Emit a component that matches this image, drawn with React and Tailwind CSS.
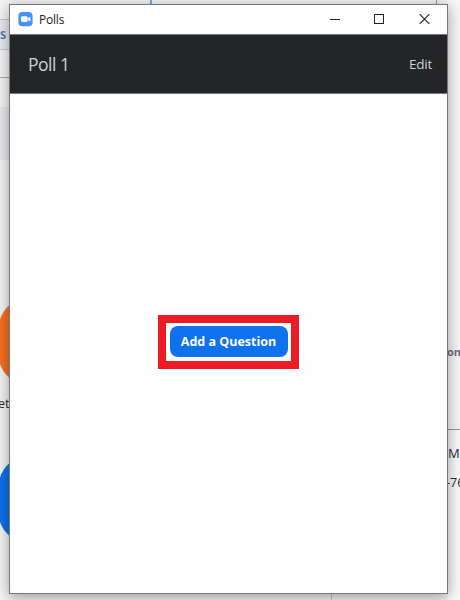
function ZoomLogo() {
  return (
    <svg width="15" height="15" viewBox="0 0 15 15" className="shrink-0">
      <rect x="0.4" y="0" width="14.2" height="14.2" rx="4" fill="#4590fb" />
      <rect x="3" y="4.3" width="6.6" height="5.6" rx="1.3" fill="#fff" />
      <path d="M9.9 6.2 12.4 4.4V9.8L9.9 8Z" fill="#fff" />
    </svg>
  );
}

function WindowControls() {
  return (
    <svg width="102" height="12" viewBox="0 0 102 12" fill="none" stroke="#222" className="shrink-0">
      <path d="M0 5.5H10" />
      <rect x="44.5" y="0.5" width="9" height="9" />
      <path d="M89.7 0.2 99.3 9.8M99.3 0.2 89.7 9.8" strokeWidth="1.1" />
    </svg>
  );
}

function LeftStrip() {
  return (
    <div className="h-full w-[9px] shrink-0 overflow-hidden bg-[#f5f5f5] text-[#27273a]">
      <div className="h-5 border-b border-[#c8c8c8]" />
      <div className="h-[30px] border-b border-[#c5cad2] bg-[#e7ecf4] pt-[7px] text-[11px] leading-4 font-bold text-[#5577a5]">S</div>
      <div className="h-[28px] border-b border-[#a8a8a8]" />
      <div className="h-[29px]" />
      <div className="h-[53px] bg-[#e9eaee]" />
      <div className="h-[139px]" />
      <div className="-ml-px h-[85px] w-[85px] rounded-[28px] bg-[#f97022]" />
      <div className="-ml-[2px] h-[73px] pt-[12px] text-[12.5px] leading-4">et</div>
      <div className="-ml-px h-[85px] w-[85px] rounded-[28px] bg-[#0e72ed]" />
    </div>
  );
}

function RightStrip() {
  return (
    <div className="h-full w-3 shrink-0 overflow-hidden bg-[#fafafa] text-[#27273a]">
      <div className="h-[430px] border-b border-[#999] bg-[#f7f7f7] pt-[344px] text-[11px] leading-4 font-bold text-[#6c6c7c]">
        <span className="-ml-px">on</span>
      </div>
      <div className="mt-[15px] text-[13px] leading-4">M</div>
      <div className="mt-[14px] -ml-[2px] text-[12.5px] leading-4 whitespace-nowrap">-76</div>
    </div>
  );
}

export default function App() {
  return (
    <div className="flex h-[600px] w-[460px] overflow-hidden bg-[#f0f0f0] font-['Open_Sans','Noto_Sans',sans-serif]">
      <LeftStrip />
      <div className="flex w-[439px] shrink-0 flex-col">
        <div className="flex h-1 shrink-0 bg-[#f3f3f3]">
          <div className="w-[143px] border-r-2 border-[#6fb2d2]" />
          <div className="w-[285px] border-r border-[#999]" />
        </div>
        <main className="z-10 flex h-[590px] shrink-0 flex-col border border-[#777] bg-[#fefefe] shadow-[0_3px_14px_rgba(0,0,0,0.38)]">
          <header className="flex h-[30px] shrink-0 items-center border-b border-[#777] bg-white pl-2">
            <ZoomLogo />
            <span className="ml-[6px] grow text-[12px] leading-4 tracking-[-0.2px] text-[#222]">Polls</span>
            <div className="mr-[15px]"><WindowControls /></div>
          </header>
          <div className="flex h-[59px] shrink-0 items-center justify-between border-b border-[#777] bg-[#232527] pr-[15px] pl-[18px] text-[#d0d0d0]">
            <h1 className="-mt-px text-[17.5px] leading-6 font-normal tracking-[-0.5px]">Poll 1</h1>
            <button className="-mt-px text-[13.5px] leading-5 font-normal tracking-[-0.25px]">Edit</button>
          </div>
          <div className="flex grow flex-col items-center pt-[221px]">
            <div className="flex h-[54px] w-[141px] items-start justify-center border-8 border-[#ed1c24] bg-white pt-[3px]">
              <button className="h-[31px] w-[118px] rounded-lg bg-[#0e72ed] pt-px text-[12.5px] font-bold whitespace-nowrap text-white">Add a Question</button>
            </div>
          </div>
        </main>
        <div className="flex grow bg-[#f3f3f3]">
          <div className="w-[323px] border-r border-[#c5c5c5]" />
        </div>
      </div>
      <RightStrip />
    </div>
  );
}
